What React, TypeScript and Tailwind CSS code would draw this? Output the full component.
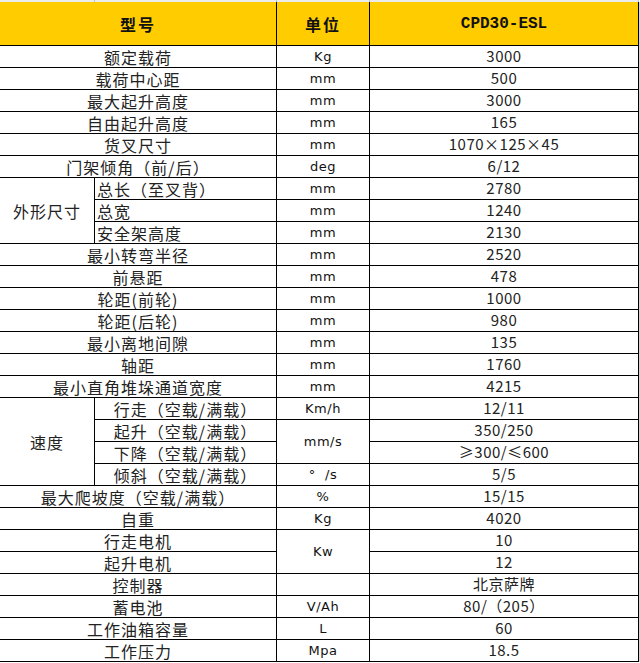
import React from "react";

type CellProps = {
    children?: React.ReactNode;
    className?: string;
};

// plain white table cell, centred unless told otherwise
function Cell({ children, className = "" }: CellProps) {
    return (
        <div className={`flex items-center justify-center bg-white ${className}`}>
            {children}
        </div>
    );
}

const label = "text-[16px] tracking-[1px] text-[#222]";
const unit = "font-['DejaVu_Sans',sans-serif] text-[13px] tracking-[0.5px] text-[#111]";
const value = "text-[15px] tracking-[0.5px] text-[#222]";

const simpleRows: [string, string, string][] = [
    ["额定载荷", "Kg", "3000"],
    ["载荷中心距", "mm", "500"],
    ["最大起升高度", "mm", "3000"],
    ["自由起升高度", "mm", "165"],
    ["货叉尺寸", "mm", "1070×125×45"],
    ["门架倾角（前/后）", "deg", "6/12"],
];

const midRows: [string, string, string][] = [
    ["最小转弯半径", "mm", "2520"],
    ["前悬距", "mm", "478"],
    ["轮距(前轮)", "mm", "1000"],
    ["轮距(后轮)", "mm", "980"],
    ["最小离地间隙", "mm", "135"],
    ["轴距", "mm", "1760"],
    ["最小直角堆垛通道宽度", "mm", "4215"],
];

const tailRows: [string, string, string][] = [
    ["控制器", "", "北京萨牌"],
    ["蓄电池", "V/Ah", "80/（205）"],
    ["工作油箱容量", "L", "60"],
    ["工作压力", "Mpa", "18.5"],
];

function Row({ row }: { row: [string, string, string] }) {
    return (
        <>
            <Cell className={`col-span-2 col-start-1 ${label}`}>{row[0]}</Cell>
            <Cell className={unit}>{row[1]}</Cell>
            <Cell className={`col-start-4 ${value}`}>{row[2]}</Cell>
        </>
    );
}

export default function App() {
    return (
        <div className="w-[640px] h-[663px] bg-white font-['Noto_Sans_CJK_SC','Noto_Sans',sans-serif]">
            {/* spreadsheet gridlines above the table */}
            <div className="w-[639px] h-[2px] grid grid-cols-[94px_181px_92px_268px] gap-px bg-[#c4c4c4] pr-px">
                <div className="bg-[#ececec]" />
                <div className="bg-[#ececec]" />
                <div className="bg-[#ececec]" />
                <div className="bg-[#ececec]" />
            </div>

            <div className="w-[640px] border-r border-[#d4d4d4]">
                <div className="w-[639px] grid grid-cols-[94px_181px_92px_268px] grid-rows-[43px] auto-rows-[21px] gap-px bg-black pr-px pb-px">
                    {/* header */}
                    <Cell className="col-span-2 bg-[#ffcc00]! text-[16px] font-bold tracking-[2px] text-[#111]">型号</Cell>
                    <Cell className="bg-[#ffcc00]! text-[16px] font-bold tracking-[2px] text-[#111]">单位</Cell>
                    <Cell className="bg-[#ffcc00]! font-['Liberation_Mono',monospace] text-[16px] font-bold text-[#111]">
                        CPD30-ESL
                    </Cell>

                    {simpleRows.map((r) => (
                        <Row key={r[0]} row={r} />
                    ))}

                    {/* 外形尺寸 group */}
                    <Cell className={`row-span-3 ${label}`}>外形尺寸</Cell>
                    <Cell className={`col-start-2 justify-start! pl-[2px] ${label}`}>总长（至叉背）</Cell>
                    <Cell className={unit}>mm</Cell>
                    <Cell className={value}>2780</Cell>
                    <Cell className={`col-start-2 justify-start! pl-[2px] ${label}`}>总宽</Cell>
                    <Cell className={unit}>mm</Cell>
                    <Cell className={value}>1240</Cell>
                    <Cell className={`col-start-2 justify-start! pl-[2px] ${label}`}>安全架高度</Cell>
                    <Cell className={unit}>mm</Cell>
                    <Cell className={value}>2130</Cell>

                    {midRows.map((r) => (
                        <Row key={r[0]} row={r} />
                    ))}

                    {/* 速度 group */}
                    <Cell className={`col-start-1 row-span-4 ${label}`}>速度</Cell>
                    <Cell className={`col-start-2 ${label}`}>行走（空载/满载）</Cell>
                    <Cell className={unit}>Km/h</Cell>
                    <Cell className={value}>12/11</Cell>
                    <Cell className={`col-start-2 ${label}`}>起升（空载/满载）</Cell>
                    <Cell className={`row-span-2 ${unit}`}>mm/s</Cell>
                    <Cell className={value}>350/250</Cell>
                    <Cell className={`col-start-2 ${label}`}>下降（空载/满载）</Cell>
                    <Cell className={`col-start-4 ${value}`}>≥300/≤600</Cell>
                    <Cell className={`col-start-2 ${label}`}>倾斜（空载/满载）</Cell>
                    <Cell className={unit}>°&nbsp;&nbsp;/s</Cell>
                    <Cell className={value}>5/5</Cell>

                    <Row row={["最大爬坡度（空载/满载）", "%", "15/15"]} />
                    <Row row={["自重", "Kg", "4020"]} />

                    <Cell className={`col-span-2 col-start-1 ${label}`}>行走电机</Cell>
                    <Cell className={`row-span-2 ${unit}`}>Kw</Cell>
                    <Cell className={value}>10</Cell>
                    <Cell className={`col-span-2 col-start-1 ${label}`}>起升电机</Cell>
                    <Cell className={`col-start-4 ${value}`}>12</Cell>

                    {tailRows.map((r) => (
                        <Row key={r[0]} row={r} />
                    ))}
                </div>
            </div>
        </div>
    );
}
